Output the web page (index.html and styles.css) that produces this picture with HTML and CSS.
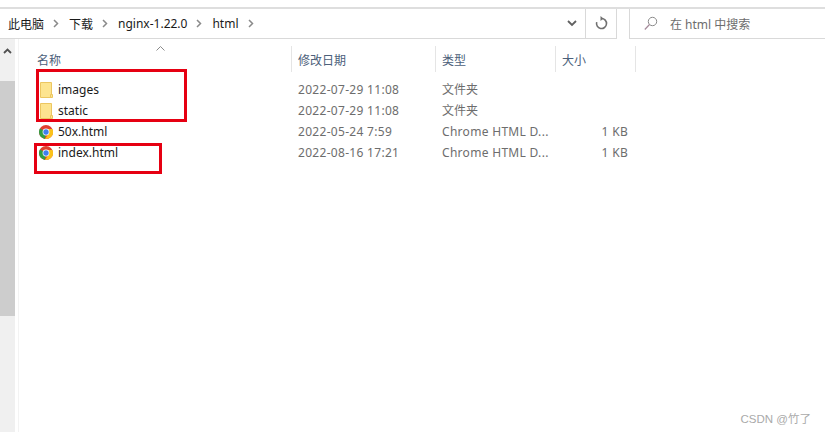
FILE: index.html
```html
<!DOCTYPE html>
<html lang="zh">
<head>
<meta charset="utf-8">
<title>html</title>
<link rel="stylesheet" href="styles.css">
</head>
<body>
<svg class="defs" width="0" height="0">
  <defs>
    <symbol id="folder" viewBox="0 0 14 16">
      <path d="M1.500.5h11v15h-11z" fill="#fde48f" stroke="#ecc660"/>
      <path d="M11.500 15.500v-3h2v3z" fill="#fde48f" stroke="#ecc660"/>
    </symbol>
    <symbol id="chrome" viewBox="0 0 14 14">
      <circle cx="7" cy="7" r="7" fill="#e0402f"/>
      <path d="M7 7 1 3.400A7 7 0 0 0 6 13.900z" fill="#2f9e44"/>
      <path d="M7 4h6.400A7 7 0 0 1 6 13.900L9.600 8.500z" fill="#fbc21a"/>
      <circle cx="7" cy="7" r="3.400" fill="#fff"/>
      <circle cx="7" cy="7" r="2.700" fill="#3f7fee"/>
    </symbol>
  </defs>
</svg>
<div class="window">
  <div class="topline"></div>
  <div class="toolbar">
    <div class="address">
      <nav class="crumbs">
        <span>此电脑</span><svg class="sep" viewBox="0 0 6 9"><path d="M1 1l3.500 3.500L1 8" /></svg>
        <span>下载</span><svg class="sep" viewBox="0 0 6 9"><path d="M1 1l3.500 3.500L1 8" /></svg>
        <span>nginx-1.22.0</span><svg class="sep" viewBox="0 0 6 9"><path d="M1 1l3.500 3.500L1 8" /></svg>
        <span>html</span><svg class="sep" viewBox="0 0 6 9"><path d="M1 1l3.500 3.500L1 8" /></svg>
      </nav>
      <div class="addr-btn addr-drop">
        <svg width="10" height="7" viewBox="0 0 10 7"><path d="M1 1l4 4 4-4" fill="none" stroke="#606060" stroke-width="1.800"/></svg>
      </div>
      <div class="addr-btn addr-refresh">
        <svg width="14" height="15" viewBox="0 0 14 15"><path d="M7.500 2.500a5 5 0 1 1-4.800 3.600" fill="none" stroke="#707070" stroke-width="1.600"/><path d="M6.500 0v5l3-2.500z" fill="#707070"/></svg>
      </div>
    </div>
    <div class="search">
      <svg width="14" height="15" viewBox="0 0 14 15"><circle cx="8.500" cy="5.500" r="4.200" fill="none" stroke="#8a8a8a"/><path d="M5.500 8.500L.8 13.500" stroke="#a58a9a" stroke-width="1.200"/></svg>
      <span class="search-text">在 html 中搜索</span>
    </div>
  </div>
  <div class="main">
    <div class="scrollbar">
      <div class="scroll-up"><svg width="9" height="6" viewBox="0 0 9 6"><path d="M1 5l3.500-3.500L8 5" fill="none" stroke="#505050" stroke-width="1.800"/></svg></div>
      <div class="scroll-thumb"></div>
    </div>
    <div class="content">
      <div class="head">
        <div class="col col-name">名称<svg class="sort" width="9" height="5" viewBox="0 0 9 5"><path d="M.5 4.500l4-4 4 4" fill="none" stroke="#8a8a8a"/></svg></div>
        <div class="col col-date">修改日期</div>
        <div class="col col-type">类型</div>
        <div class="col col-size">大小</div>
      </div>
      <div class="row">
        <div class="cell col-name name"><svg class="ico"><use href="#folder"/></svg>images</div>
        <div class="cell col-date num">2022-07-29 11:08</div>
        <div class="cell col-type">文件夹</div>
        <div class="cell col-size"></div>
      </div>
      <div class="row">
        <div class="cell col-name name"><svg class="ico"><use href="#folder"/></svg>static</div>
        <div class="cell col-date num">2022-07-29 11:08</div>
        <div class="cell col-type">文件夹</div>
        <div class="cell col-size"></div>
      </div>
      <div class="row">
        <div class="cell col-name name"><svg class="ico"><use href="#chrome"/></svg>50x.html</div>
        <div class="cell col-date num">2022-05-24 7:59</div>
        <div class="cell col-type num">Chrome HTML D...</div>
        <div class="cell col-size num">1 KB</div>
      </div>
      <div class="row">
        <div class="cell col-name name"><svg class="ico"><use href="#chrome"/></svg>index.html</div>
        <div class="cell col-date num">2022-08-16 17:21</div>
        <div class="cell col-type num">Chrome HTML D...</div>
        <div class="cell col-size num">1 KB</div>
      </div>
    </div>
  </div>
  <div class="mark mark-folders"></div>
  <div class="mark mark-index"></div>
  <div class="watermark">CSDN @竹了</div>
</div>
</body>
</html>
```
FILE: styles.css
```css
* { box-sizing: border-box; }
html, body { margin: 0; padding: 0; background: #fff; }
body {
  width: 825px;
  height: 432px;
  overflow: hidden;
  font-family: "Noto Sans", "Noto Sans CJK SC", sans-serif;
  font-size: 12px;
  color: #1a1a1a;
}
.defs { position: absolute; }
.window { position: relative; width: 825px; height: 432px; overflow: hidden; }
.topline { height: 9px; border-bottom: 2px solid #dedede; }
.toolbar { display: flex; height: 30px; }
.address {
  width: 617px;
  display: flex;
  align-items: stretch;
  border-bottom: 1px solid #d9d9d9;
  border-right: 1px solid #d9d9d9;
}
.crumbs {
  flex: 1;
  display: flex;
  align-items: center;
  padding-left: 8px;
  font-size: 12px;
}
.sep { width: 6px; height: 9px; margin: 0 10px 0 9px; fill: none; stroke: #8a8a8a; stroke-width: 1.500; }
.addr-btn { display: flex; align-items: center; justify-content: center; }
.addr-drop { width: 27px; border-right: 1px solid #d9d9d9; }
.addr-refresh { width: 30px; }
.search {
  width: 196px;
  margin-left: 12px;
  display: flex;
  align-items: center;
  padding-left: 14px;
  gap: 12px;
  border-left: 1px solid #d9d9d9;
  border-bottom: 1px solid #d9d9d9;
  color: #6d6d6d;
}
.main { display: flex; height: 393px; }
.scrollbar { width: 15px; background: #f0f0f0; }
.scroll-up { height: 42px; display: flex; justify-content: center; padding-top: 9px; }
.scroll-thumb { height: 235px; background: #cdcdcd; }
.content { flex: 1; margin-left: 3px; border-left: 1px solid #f3f3f3; padding-top: 7px; }
.head, .row { display: flex; }
.head { height: 33px; position: relative; color: #4c607a; }
.col { height: 26px; padding-left: 5px; padding-top: 5px; border-right: 1px solid #e5e5e5; position: relative; }
.col-name { width: 273px; padding-left: 18px; }
.col-date { width: 144px; padding-left: 6px; }
.col-type { width: 120px; padding-left: 6px; }
.col-size { width: 80px; padding-left: 6px; }
.sort { position: absolute; left: 137px; top: 0; }
.row { height: 21px; align-items: center; color: #6d6d6d; }
.cell { height: 21px; line-height: 21px; white-space: nowrap; }
.cell.name { display: flex; align-items: center; color: #1a1a1a; padding-left: 20px; }
.num { letter-spacing: .3px; }
.ico { width: 14px; height: 16px; margin-right: 5px; flex: none; }
.cell.col-size { text-align: right; padding-right: 8px; }
.mark { position: absolute; border: 3px solid #e60012; }
.mark-folders { left: 36px; top: 69px; width: 151px; height: 53px; }
.mark-index { left: 34px; top: 143px; width: 128px; height: 31px; }
.watermark { position: absolute; right: 14px; top: 410px; font-family: "Liberation Sans", "Noto Sans CJK SC", sans-serif; font-size: 11.5px; color: #aaa; }
```
